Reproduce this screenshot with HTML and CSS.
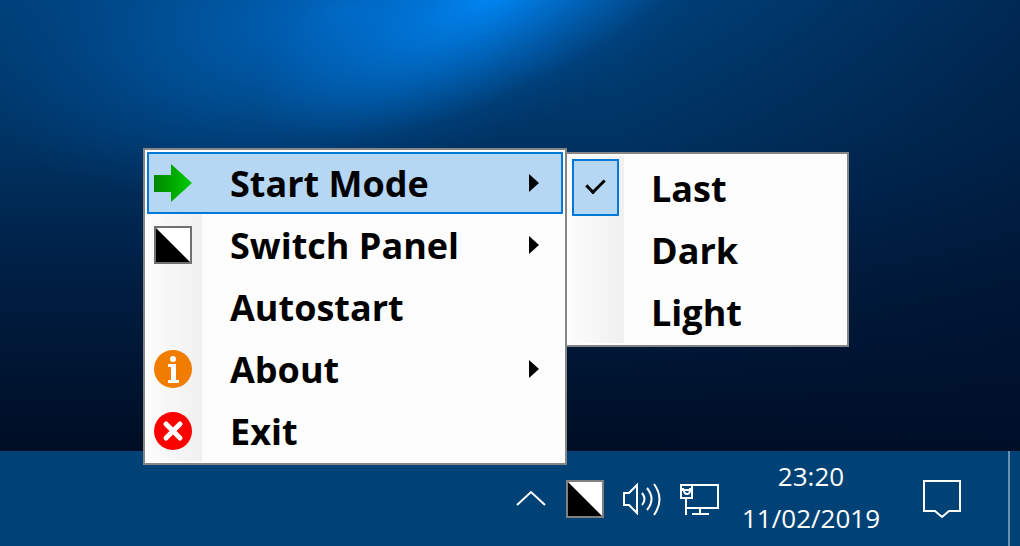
FILE: index.html
```
<!DOCTYPE html>
<html lang="en">
<head>
    <meta charset="UTF-8">
    <meta name="viewport" content="width=device-width, initial-scale=1.0">
    <title>Tray menu</title>
    <link rel="stylesheet" href="styles.css">
</head>
<body>
    <main class="wallpaper">
        <svg class="light" viewBox="0 0 1020 451" preserveAspectRatio="none" aria-hidden="true">
            <defs>
                <radialGradient id="halo">
                    <stop offset="0" stop-color="#0068c4" stop-opacity="0.95"/>
                    <stop offset="0.5" stop-color="#0060b4" stop-opacity="0.5"/>
                    <stop offset="1" stop-color="#0050a0" stop-opacity="0"/>
                </radialGradient>
                <radialGradient id="beam">
                    <stop offset="0" stop-color="#0088f8"/>
                    <stop offset="0.5" stop-color="#007ce4" stop-opacity="0.5"/>
                    <stop offset="1" stop-color="#0070d0" stop-opacity="0"/>
                </radialGradient>
            </defs>
            <ellipse cx="350" cy="10" rx="380" ry="170" fill="url(#halo)" transform="rotate(-14 350 10)"/>
            <ellipse cx="500" cy="-10" rx="270" ry="100" fill="url(#beam)" transform="rotate(-27 500 -10)"/>
        </svg>
    </main>

    <footer class="taskbar">
        <button class="tray-button" aria-label="Show hidden icons">
            <svg width="32" height="20" viewBox="0 0 32 20" fill="none" stroke="#fff" stroke-width="2"><path d="M1 16 15 3l14 13"/></svg>
        </button>
        <button class="tray-button" aria-label="Switch theme">
            <svg width="38" height="38" viewBox="0 0 38 38"><path fill="#fff" stroke="#808080" stroke-width="2" d="M1 1h36v36H1z"/><path d="M2 2v34h34z"/></svg>
        </button>
        <button class="tray-button" aria-label="Volume">
            <svg width="40" height="38" viewBox="0 0 40 38" fill="none" stroke="#fff" stroke-width="2"><path d="M2 13h5l8-8v28l-8-8H2z"/><path d="M20 13q5 6 0 12M25 8q9 11 0 22M32 4q11 15 0 31"/></svg>
        </button>
        <button class="tray-button" aria-label="Network">
            <svg width="40" height="38" viewBox="0 0 40 38" fill="none" stroke="#fff" stroke-width="2"><path d="M12 5h26v23H7M20 28v6M12 34h17M6 18v17M1 5h11v13H1z"/><path d="M3 8v2h7V8M4 10q0 4 3 4t3-4"/></svg>
        </button>
        <button class="tray-button clock">
            <span>23:20</span>
            <span>11/02/2019</span>
        </button>
        <button class="tray-button notifications" aria-label="Notifications">
            <svg width="40" height="40" viewBox="0 0 40 40" fill="none" stroke="#fff" stroke-width="2"><path d="M2 2h36v30H27l-7 6-7-6H2z"/></svg>
        </button>
        <button class="show-desktop" aria-label="Show desktop"></button>
    </footer>

    <div class="popup">
        <nav class="menu">
            <button class="menu-item active">
                <svg class="icon" viewBox="0 0 38 38">
                    <defs><linearGradient id="green"><stop offset="0" stop-color="#008600"/><stop offset="1" stop-color="#00cc00"/></linearGradient></defs>
                    <path fill="url(#green)" d="M0 11h17V0l21 19-21 19V28H0z"/>
                </svg>
                <span class="label">Start Mode</span>
                <span class="arrow"></span>
            </button>
            <button class="menu-item">
                <svg class="icon" viewBox="0 0 38 38"><path fill="#fff" stroke="#707070" stroke-width="2" d="M1 1h36v36H1z"/><path d="M2 2v34h34z"/></svg>
                <span class="label">Switch Panel</span>
                <span class="arrow"></span>
            </button>
            <button class="menu-item">
                <span class="icon"></span>
                <span class="label">Autostart</span>
            </button>
            <button class="menu-item">
                <svg class="icon" viewBox="0 0 38 38"><circle cx="19" cy="19" r="19" fill="#f07c00"/><circle cx="19" cy="9" r="3" fill="#fff"/><path fill="#fff" d="M14 14h8v16h3v3H14v-3h3V17h-3z"/></svg>
                <span class="label">About</span>
                <span class="arrow"></span>
            </button>
            <button class="menu-item">
                <svg class="icon" viewBox="0 0 38 38"><circle cx="19" cy="19" r="19" fill="#f00"/><path stroke="#fff" stroke-width="5" stroke-linecap="round" d="m12 12 14 14M26 12 12 26"/></svg>
                <span class="label">Exit</span>
            </button>
        </nav>

        <div class="menu submenu">
            <label class="menu-item"><input type="radio" name="mode" checked>Last</label>
            <label class="menu-item"><input type="radio" name="mode">Dark</label>
            <label class="menu-item"><input type="radio" name="mode">Light</label>
        </div>
    </div>
</body>
</html>
```
FILE: styles.css
```
* {
    box-sizing: border-box;
}

body {
    margin: 0;
    min-height: 100vh;
    display: flex;
    flex-direction: column;
    position: relative;
    font-family: "Open Sans", "Noto Sans", sans-serif;
}

button {
    margin: 0;
    border: none;
    background: none;
    font-family: inherit;
    cursor: pointer;
}

svg {
    display: block;
}

/* Desktop background with the light coming from the top */
.wallpaper {
    flex: 1;
    position: relative;
    overflow: hidden;
    background:
        linear-gradient(90deg, transparent 60%, rgba(0, 16, 44, 0.5)),
        linear-gradient(#00427c, #003464 30%, #001e42 62%, #000d24);
}

.light {
    position: absolute;
    inset: 0;
    width: 100%;
    height: 100%;
}

/* Taskbar */
.taskbar {
    display: flex;
    align-items: center;
    justify-content: flex-end;
    height: 95px;
    background-color: #004275;
}

.tray-button {
    padding: 0;
    margin-right: 18px;
    color: #fff;
}

.clock {
    display: flex;
    flex-direction: column;
    align-items: center;
    margin: 0 42px 0 4px;
    padding-bottom: 4px;
    font-size: 26px;
    line-height: 42px;
}

.notifications {
    margin-right: 46px;
}

.show-desktop {
    align-self: stretch;
    width: 12px;
    padding: 0;
    border-left: 2px solid #6690b0;
}

/* Menu that opens over the desktop */
.popup {
    position: absolute;
    right: 171px;
    bottom: 81px;
    display: flex;
    align-items: flex-start;
}

.menu {
    width: 424px;
    padding: 2px 2px 1px;
    border: 2px solid #858585;
    background: linear-gradient(90deg, #fcfcfc, #f0f0f0) 2px 2px / 55px calc(100% - 4px) no-repeat #fdfdfd;
}

.menu-item {
    display: flex;
    align-items: center;
    width: 100%;
    height: 62px;
    padding: 0 24px 0 7px;
    color: #000;
    font-size: 36px;
    font-weight: bold;
    text-align: left;
}

.active {
    padding: 0 22px 0 5px;
    border: 2px solid #0078d7;
    background-color: #b5d7f3;
}

.icon {
    width: 38px;
    height: 38px;
    margin-right: 38px;
}

.label {
    flex: 1;
}

.arrow {
    border: 9px solid transparent;
    border-left: 10px solid #000;
    border-right: none;
}

.submenu {
    width: 282px;
    margin-top: 4px;
    padding: 3px 2px 2px;
    border-left: none;
}

.submenu .menu-item {
    padding: 0 3px;
}

.submenu input {
    appearance: none;
    display: flex;
    align-items: center;
    justify-content: center;
    width: 47px;
    height: 57px;
    margin: 0 32px 2px 0;
}

.submenu input:checked {
    border: 2px solid #0078d7;
    background-color: #b5d7f3;
}

.submenu input:checked::before {
    content: "";
    width: 8px;
    height: 15px;
    margin-bottom: 6px;
    border: solid #000;
    border-width: 0 3px 3px 0;
    transform: rotate(45deg);
}
```
